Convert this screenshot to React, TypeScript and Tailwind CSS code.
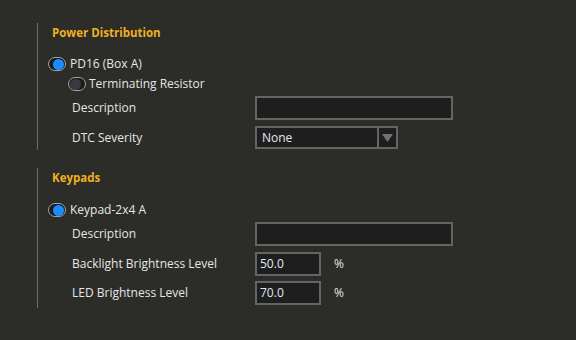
const font = { fontFamily: '"Open Sans", "Noto Sans", sans-serif' };

function Toggle({ on }: { on: boolean }) {
  return (
    <span
      className={
        "flex h-[14px] w-[18px] shrink-0 items-center rounded-full border border-[#a4a4a4] bg-[#1c1c1e] px-[1px] " +
        (on ? "justify-end" : "justify-start")
      }
    >
      <span
        className={
          "h-[11px] w-[11px] rounded-full " + (on ? "bg-[#1b8cff]" : "bg-[#3a3a3e]")
        }
      />
    </span>
  );
}

function Field({ w, value }: { w: string; value?: string }) {
  return (
    <div
      className={
        "flex h-[24px] items-center border-2 border-[#646462] bg-[#1e1e1e] px-[3px] text-[12px] text-[#e4e8ef] " + w
      }
    >
      {value}
    </div>
  );
}

function Row({ label, children, mt }: { label: string; children: React.ReactNode; mt: string }) {
  return (
    <div className={"flex items-center " + mt}>
      <span className="ml-[24px] w-[183px] text-[12px] text-[#e6e6e6]">{label}</span>
      {children}
    </div>
  );
}

export default function App() {
  return (
    <div className="h-[340px] w-[576px] overflow-hidden bg-[#2c2c28] pt-[23px]" style={font}>
      <section className="ml-[37px] border-l border-[#6c6c68] pb-[1px] pl-[10px]">
        <div className="ml-[4px] flex h-[20px] items-center text-[11.5px] font-bold text-[#eeb11f]">
          Power Distribution
        </div>
        <div className="mt-[11px] flex h-[20px] items-center gap-[4px] text-[12px] text-[#e6e6e6]">
          <Toggle on />
          <span>PD16 (Box A)</span>
        </div>
        <div className="ml-[20px] flex h-[20px] items-center gap-[3px] text-[12px] text-[#e6e6e6]">
          <Toggle on={false} />
          <span>Terminating Resistor</span>
        </div>
        <Row label="Description" mt="mt-[2px]">
          <Field w="w-[198px]" />
        </Row>
        <Row label="DTC Severity" mt="mt-[6px]">
          <div className="flex h-[23px] w-[143px] border-2 border-[#646462] bg-[#1e1e1e]">
            <span className="flex flex-1 items-center pl-[5px] text-[12px] text-[#e4e8ef]">None</span>
            <span className="flex w-[19px] items-center justify-center border-l-2 border-[#646462]">
              <svg width="11" height="8" viewBox="0 0 11 8">
                <path d="M0 0 L11 0 L5.5 8 Z" fill="#727272" />
              </svg>
            </span>
          </div>
        </Row>
      </section>

      <section className="ml-[37px] mt-[18px] border-l border-[#6c6c68] pb-[3px] pl-[10px]">
        <div className="ml-[4px] flex h-[20px] items-center text-[11.5px] font-bold text-[#eeb11f]">
          Keypads
        </div>
        <div className="mt-[12px] flex h-[20px] items-center gap-[4px] text-[12px] text-[#e6e6e6]">
          <Toggle on />
          <span>Keypad-2x4 A</span>
        </div>
        <Row label="Description" mt="mt-[2px]">
          <Field w="w-[198px]" />
        </Row>
        <Row label="Backlight Brightness Level" mt="mt-[6px]">
          <Field w="w-[66px]" value="50.0" />
          <span className="ml-[13px] text-[12px] text-[#e6e6e6]">%</span>
        </Row>
        <Row label="LED Brightness Level" mt="mt-[5px]">
          <Field w="w-[66px]" value="70.0" />
          <span className="ml-[13px] text-[12px] text-[#e6e6e6]">%</span>
        </Row>
      </section>
    </div>
  );
}
